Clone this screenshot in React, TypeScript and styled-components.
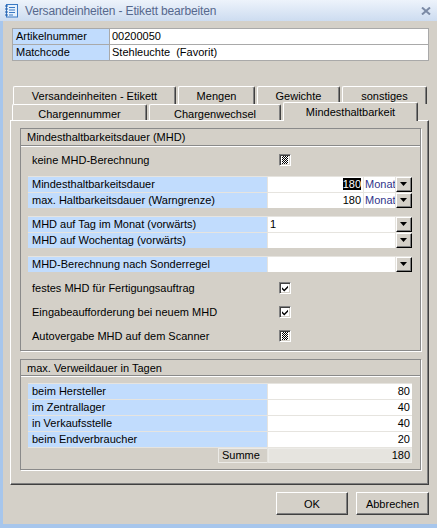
import { Fragment } from "react";
import styled, { createGlobalStyle } from "styled-components";

const GlobalStyle = createGlobalStyle`
  body {
    margin: 0;
    font-family: "Liberation Sans", Arial, sans-serif;
    font-size: 11px;
    color: #000;
  }
  * {
    box-sizing: border-box;
  }
`;

const BLUE = "#c1dcfd";
const FACE = "#d4d0c8";

const Window = {
  Main: styled.div`
    width: 437px;
    height: 528px;
    display: flex;
    flex-direction: column;
    background: ${FACE};
    overflow: hidden;
  `,
  Title: styled.div`
    height: 21px;
    display: flex;
    align-items: center;
    gap: 6px;
    padding: 0 6px 0 4px;
    background: linear-gradient(#edf3fb, #cddcf0);
    color: #56688d;
    font-size: 12px;
  `,
  Caption: styled.span`
    flex: 1;
    letter-spacing: -0.15px;
  `,
  Frame: styled.div`
    flex: 1;
    display: flex;
    flex-direction: column;
    border-left: 3px solid #a7c6ec;
    border-bottom: 4px solid #a7c6ec;
    padding: 7px 8px 0 9px;
  `,
};

const Header = {
  Table: styled.div`
    display: grid;
    grid-template-columns: 96px 1fr;
    grid-auto-rows: 15px;
    gap: 1px;
    padding: 1px;
    background: #a9a9a9;
  `,
  Label: styled.div`
    background: ${BLUE};
    padding-left: 3px;
    line-height: 15px;
  `,
  Value: styled.div`
    background: #fff;
    padding-left: 2px;
    line-height: 15px;
  `,
};

const Tabs = {
  Control: styled.div`
    margin: 25px 0 0 -2px;
    width: 419px;
    display: flex;
    flex-direction: column;
  `,
  Row: styled.div<{ $pad: number; $h: number }>`
    display: flex;
    gap: 2px;
    height: ${({ $h }) => $h}px;
    padding-left: ${({ $pad }) => $pad}px;
  `,
  Tab: styled.div<{ $w: number; $active?: boolean }>`
    width: ${({ $w }) => $w}px;
    height: ${({ $active }) => ($active ? "calc(100% + 3px)" : "100%")};
    margin-top: ${({ $active }) => ($active ? -2 : 0)}px;
    position: relative;
    z-index: ${({ $active }) => ($active ? 2 : 1)};
    background: ${FACE};
    border-top: 1px solid #fff;
    border-left: 1px solid #fff;
    border-right: 1px solid #404040;
    border-radius: 2px 2px 0 0;
    box-shadow: inset -1px 0 0 #808080;
    display: flex;
    justify-content: center;
    padding-top: 3px;
    line-height: 13px;
    white-space: nowrap;
  `,
  Panel: styled.div`
    height: 365px;
    border-top: 1px solid #fff;
    border-left: 1px solid #fff;
    border-right: 1px solid #404040;
    border-bottom: 1px solid #404040;
    box-shadow: inset -1px -1px 0 #808080;
    padding: 7px 0 0 9px;
    display: flex;
    flex-direction: column;
    gap: 8px;
  `,
};

const Group = {
  Box: styled.div`
    width: 401px;
    border: 1px solid #8a8a8a;
    box-shadow: 1px 1px 0 #fff;
  `,
  Head: styled.div<{ $h: number }>`
    height: ${({ $h }) => $h}px;
    line-height: ${({ $h }) => $h}px;
    padding-left: 6px;
    border-bottom: 1px solid #8a8a8a;
    box-shadow: 0 1px 0 #fff;
  `,
  Body: styled.div<{ $top: number; $bottom: number }>`
    display: flex;
    flex-direction: column;
    gap: 8px;
    padding: ${({ $top, $bottom }) => `${$top}px 8px ${$bottom}px 7px`};
  `,
};

const Form = {
  Block: styled.div`
    display: grid;
    grid-template-columns: 239px 1fr;
    grid-auto-rows: 15px;
    gap: 1px;
    padding-top: 1px;
    background: #e6e4df;
  `,
  Label: styled.div`
    background: ${BLUE};
    padding-left: 4px;
    line-height: 15px;
    white-space: nowrap;
  `,
  Plain: styled.div`
    height: 16px;
    display: flex;
    align-items: center;
  `,
  PlainLabel: styled.div`
    width: 246px;
    padding-left: 4px;
  `,
  Field: styled.div`
    display: flex;
    gap: 1px;
  `,
  Input: styled.div<{ $right?: boolean }>`
    flex: 1;
    background: #fff;
    line-height: 15px;
    text-align: ${({ $right }) => ($right ? "right" : "left")};
    padding: 0 2px;
  `,
  Unit: styled.div`
    width: 31px;
    background: #fff;
    line-height: 15px;
    color: #31348a;
    padding-left: 1px;
    overflow: hidden;
  `,
  Selected: styled.span`
    background: #000;
    color: #fff;
  `,
  Drop: styled.div`
    width: 16px;
    height: 15px;
    background: ${FACE};
    border-top: 1px solid #fff;
    border-left: 1px solid #fff;
    border-right: 1px solid #000;
    border-bottom: 1px solid #000;
    box-shadow: inset -1px -1px 0 #808080;
    display: flex;
    align-items: center;
    justify-content: center;
    padding: 0 1px 1px 0;
  `,
  Sum: styled.div`
    display: flex;
    justify-content: flex-end;
    background: ${FACE};
  `,
  SumLabel: styled.div`
    width: 49px;
    line-height: 13px;
    border: 1px solid #ecebe7;
    border-right: none;
    padding-left: 3px;
  `,
  SumValue: styled.div`
    line-height: 13px;
    border: 1px solid #ecebe7;
    text-align: right;
    padding-right: 1px;
  `,
};

const Check = styled.div`
  width: 12px;
  height: 12px;
  margin-left: 5px;
  border-top: 1px solid #808080;
  border-left: 1px solid #808080;
  border-right: 1px solid #fff;
  border-bottom: 1px solid #fff;
  box-shadow: inset 1px 1px 0 #404040, inset -1px -1px 0 ${FACE};
  padding: 2px;
  background: #fff;
  display: flex;
  align-items: center;
  justify-content: center;
  & > i {
    display: block;
    width: 8px;
    height: 8px;
    background: repeating-conic-gradient(#000 0 25%, #fff 0 50%) 0 0 / 2px 2px;
  }
`;

const Footer = styled.div`
  display: flex;
  justify-content: flex-end;
  gap: 8px;
  margin-top: 7px;
`;

const Button = styled.button<{ $w: number }>`
  width: ${({ $w }) => $w}px;
  height: 23px;
  font: inherit;
  color: #000;
  background: ${FACE};
  border-top: 1px solid #fff;
  border-left: 1px solid #fff;
  border-right: 1px solid #404040;
  border-bottom: 1px solid #404040;
  box-shadow: inset -1px -1px 0 #808080;
  padding: 0;
`;

function Arrow() {
  return (
    <svg width="7" height="4" viewBox="0 0 7 4">
      <path d="M0 0h7L3.5 4z" fill="#000" />
    </svg>
  );
}

function Tick() {
  return (
    <svg width="8" height="8" viewBox="0 0 8 8">
      <path d="M0 3l3 3 5-5v2.5l-5 5-3-3z" fill="#000" />
    </svg>
  );
}

const SHELF = [
  { label: "beim Hersteller", days: 80 },
  { label: "im Zentrallager", days: 40 },
  { label: "in Verkaufsstelle", days: 40 },
  { label: "beim Endverbraucher", days: 20 },
];

export default function App() {
  const total = SHELF.reduce((sum, row) => sum + row.days, 0);

  return (
    <Window.Main>
      <GlobalStyle />
      <Window.Title>
        <svg width="15" height="15" viewBox="0 0 15 15">
          <rect x="2.5" y="1.5" width="11" height="12.5" fill="#e6f1fc" stroke="#3a79c4" />
          <path d="M5 4.5h6M5 7h6M5 9.5h6M5 12h4" stroke="#3a79c4" />
          <path d="M1 3h3M1 6h3M1 9h3M1 12h3" stroke="#1f5aa8" strokeWidth="1.2" />
        </svg>
        <Window.Caption>Versandeinheiten - Etikett bearbeiten</Window.Caption>
        <svg width="10" height="8" viewBox="0 0 10 8">
          <path d="M1 0.5l8 7M9 0.5l-8 7" stroke="#7b8aa5" strokeWidth="2" />
        </svg>
      </Window.Title>
      <Window.Frame>
        <Header.Table>
          <Header.Label>Artikelnummer</Header.Label>
          <Header.Value>00200050</Header.Value>
          <Header.Label>Matchcode</Header.Label>
          <Header.Value>Stehleuchte&nbsp; (Favorit)</Header.Value>
        </Header.Table>

        <Tabs.Control>
          <Tabs.Row $pad={3} $h={18}>
            <Tabs.Tab $w={163}>Versandeinheiten - Etikett</Tabs.Tab>
            <Tabs.Tab $w={77}>Mengen</Tabs.Tab>
            <Tabs.Tab $w={83}>Gewichte</Tabs.Tab>
            <Tabs.Tab $w={85}>sonstiges</Tabs.Tab>
          </Tabs.Row>
          <Tabs.Row $pad={2} $h={16}>
            <Tabs.Tab $w={135}>Chargennummer</Tabs.Tab>
            <Tabs.Tab $w={132}>Chargenwechsel</Tabs.Tab>
            <Tabs.Tab $w={135} $active>
              Mindesthaltbarkeit
            </Tabs.Tab>
          </Tabs.Row>
          <Tabs.Panel>
            <Group.Box>
              <Group.Head $h={17}>Mindesthaltbarkeitsdauer (MHD)</Group.Head>
              <Group.Body $top={6} $bottom={6}>
                <Form.Plain>
                  <Form.PlainLabel>keine MHD-Berechnung</Form.PlainLabel>
                  <Check>
                    <i />
                  </Check>
                </Form.Plain>

                <Form.Block>
                  <Form.Label>Mindesthaltbarkeitsdauer</Form.Label>
                  <Form.Field>
                    <Form.Input $right>
                      <Form.Selected>180</Form.Selected>
                    </Form.Input>
                    <Form.Unit>Monat</Form.Unit>
                    <Form.Drop>
                      <Arrow />
                    </Form.Drop>
                  </Form.Field>
                  <Form.Label>max. Haltbarkeitsdauer (Warngrenze)</Form.Label>
                  <Form.Field>
                    <Form.Input $right>180</Form.Input>
                    <Form.Unit>Monat</Form.Unit>
                    <Form.Drop>
                      <Arrow />
                    </Form.Drop>
                  </Form.Field>
                </Form.Block>

                <Form.Block>
                  <Form.Label>MHD auf Tag im Monat (vorwärts)</Form.Label>
                  <Form.Field>
                    <Form.Input>1</Form.Input>
                    <Form.Drop>
                      <Arrow />
                    </Form.Drop>
                  </Form.Field>
                  <Form.Label>MHD auf Wochentag (vorwärts)</Form.Label>
                  <Form.Field>
                    <Form.Input />
                    <Form.Drop>
                      <Arrow />
                    </Form.Drop>
                  </Form.Field>
                </Form.Block>

                <Form.Block>
                  <Form.Label>MHD-Berechnung nach Sonderregel</Form.Label>
                  <Form.Field>
                    <Form.Input />
                    <Form.Drop>
                      <Arrow />
                    </Form.Drop>
                  </Form.Field>
                </Form.Block>

                <Form.Plain>
                  <Form.PlainLabel>festes MHD für Fertigungsauftrag</Form.PlainLabel>
                  <Check>
                    <Tick />
                  </Check>
                </Form.Plain>
                <Form.Plain>
                  <Form.PlainLabel>Eingabeaufforderung bei neuem MHD</Form.PlainLabel>
                  <Check>
                    <Tick />
                  </Check>
                </Form.Plain>
                <Form.Plain>
                  <Form.PlainLabel>Autovergabe MHD auf dem Scanner</Form.PlainLabel>
                  <Check>
                    <i />
                  </Check>
                </Form.Plain>
              </Group.Body>
            </Group.Box>

            <Group.Box>
              <Group.Head $h={16}>max. Verweildauer in Tagen</Group.Head>
              <Group.Body $top={7} $bottom={6}>
                <Form.Block>
                  {SHELF.map((row) => (
                    <Fragment key={row.label}>
                      <Form.Label>{row.label}</Form.Label>
                      <Form.Input $right>{row.days}</Form.Input>
                    </Fragment>
                  ))}
                  <Form.Sum>
                    <Form.SumLabel>Summe</Form.SumLabel>
                  </Form.Sum>
                  <Form.SumValue>{total}</Form.SumValue>
                </Form.Block>
              </Group.Body>
            </Group.Box>
          </Tabs.Panel>
        </Tabs.Control>

        <Footer>
          <Button $w={72}>OK</Button>
          <Button $w={73}>Abbrechen</Button>
        </Footer>
      </Window.Frame>
    </Window.Main>
  );
}
